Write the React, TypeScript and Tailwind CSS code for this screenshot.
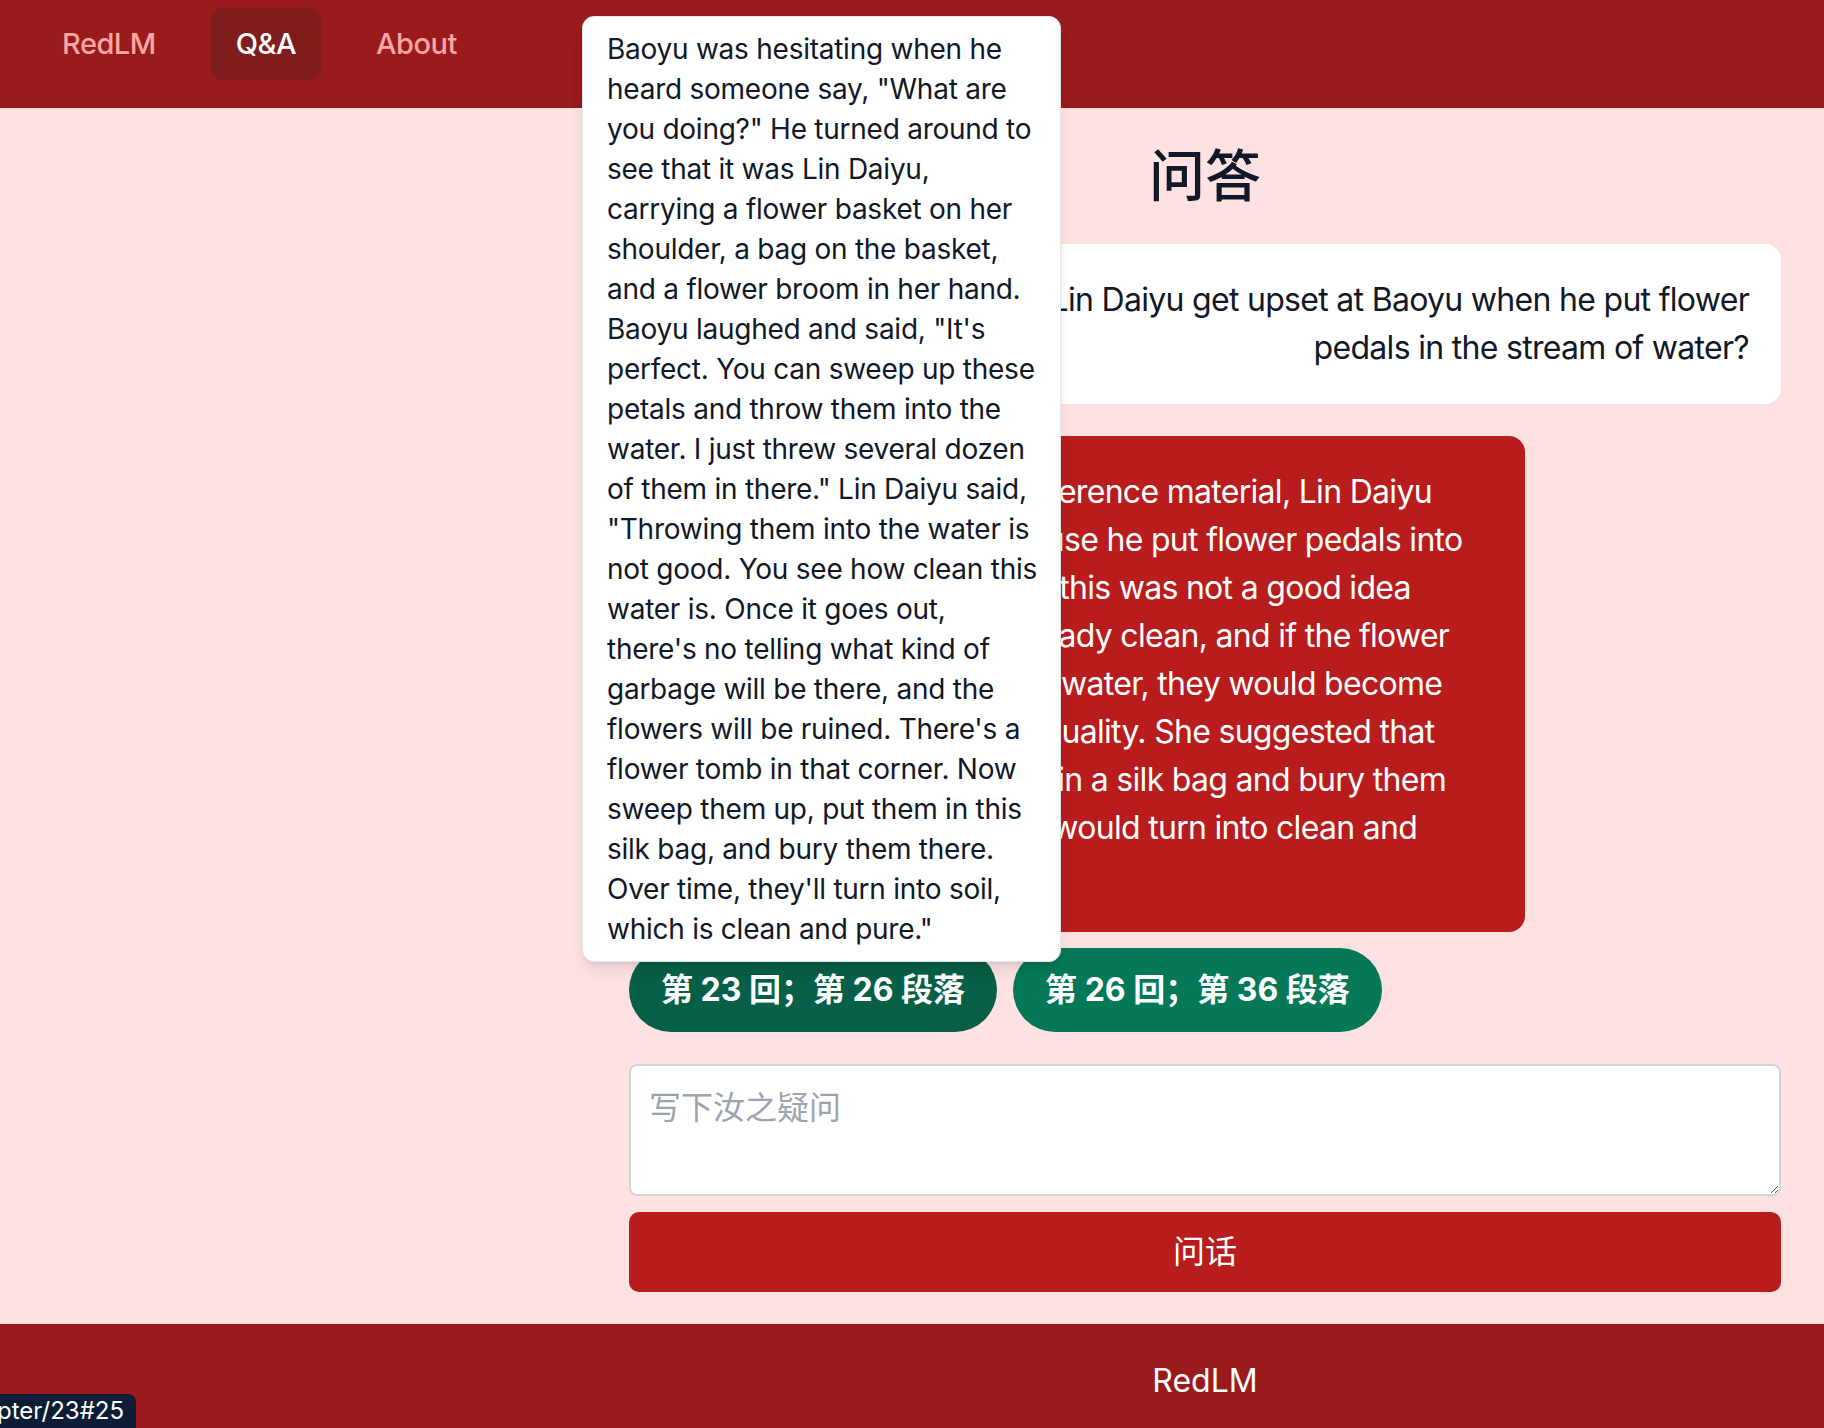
import React from "react";

const font = "font-['Inter','Noto_Sans_CJK_SC',sans-serif]";

const passage = [
  "Baoyu was hesitating when he",
  'heard someone say, "What are',
  'you doing?" He turned around to',
  "see that it was Lin Daiyu,",
  "carrying a flower basket on her",
  "shoulder, a bag on the basket,",
  "and a flower broom in her hand.",
  'Baoyu laughed and said, "It\'s',
  "perfect. You can sweep up these",
  "petals and throw them into the",
  "water. I just threw several dozen",
  'of them in there." Lin Daiyu said,',
  '"Throwing them into the water is',
  "not good. You see how clean this",
  "water is. Once it goes out,",
  "there's no telling what kind of",
  "garbage will be there, and the",
  "flowers will be ruined. There's a",
  "flower tomb in that corner. Now",
  "sweep them up, put them in this",
  "silk bag, and bury them there.",
  "Over time, they'll turn into soil,",
  'which is clean and pure."',
];

const answer = [
  "According to the quoted reference material, Lin Daiyu",
  "got upset with Baoyu because he put flower pedals into",
  "the water. She thought that this was not a good idea",
  "because the water was already clean, and if the flower",
  "petals were thrown into the water, they would become",
  "dirty and spoil the water's quality. She suggested that",
  "Baoyu gather up the petals in a silk bag and bury them",
  "in the flower tomb, so they would turn into clean and",
  "pure soil.",
];

function Lines({ lines }: { lines: string[] }) {
  return (
    <>
      {lines.map((l, i) => (
        <span key={i} className="block whitespace-nowrap">
          {l}
        </span>
      ))}
    </>
  );
}

export default function App() {
  return (
    <div className={`relative h-[1428px] overflow-hidden bg-[#fee2e2] text-[#111827] ${font}`}>
      <header className="h-[108px] bg-[#991b1b]">
        <nav className="flex gap-[31px] pl-[38px] pt-2 text-[29px] font-medium leading-[48px] tracking-[-0.5px]">
          <a className="rounded-xl px-6 py-3 text-[#fca5a5]">RedLM</a>
          <a className="rounded-xl bg-[#7f1d1d] px-[25px] py-3 text-white">Q&amp;A</a>
          <a className="rounded-xl px-6 py-3 text-[#fca5a5]">About</a>
        </nav>
      </header>

      <main className="h-[1216px] pl-[629px] pr-[43px] pt-8">
        <h1 className="mb-8 text-center text-[56px] font-medium leading-[72px]">问答</h1>

        <div className="flex flex-col">
          <div className="ml-auto w-[896px] rounded-2xl bg-white p-8 text-right text-[32px] leading-[48px] tracking-[-0.7px]">
            <Lines lines={["Why did Lin Daiyu get upset at Baoyu when he put flower", "pedals in the stream of water?"]} />
          </div>

          <div className="mt-8 w-[896px] rounded-2xl bg-[#b91c1c] p-8 text-[32px] leading-[48px] tracking-[-0.7px] text-white">
            <Lines lines={answer} />
          </div>

          <div className="mt-4 flex gap-4">
            <div className="relative">
              <button className="h-[84px] rounded-full bg-[#065f46] px-8 text-[32px] font-bold text-white">
                第 23 回；第 26 段落
              </button>
              <div className="absolute bottom-[70px] left-[-47px] z-10 w-[479px] rounded-xl border border-[#e5e7eb] bg-white px-6 py-3 text-[28px] leading-[40px] tracking-[-0.25px] shadow-lg">
                <Lines lines={passage} />
              </div>
            </div>
            <button className="h-[84px] rounded-full bg-[#047857] px-8 text-[32px] font-bold text-white">
              第 26 回；第 36 段落
            </button>
          </div>

          <textarea
            className={`mt-8 block h-[132px] w-full rounded-lg border-2 border-[#d1d5db] bg-white p-[18px] text-[32px] leading-[48px] placeholder:text-[#9ca3af] ${font}`}
            placeholder="写下汝之疑问"
          />

          <button className="mt-4 h-20 w-full rounded-[10px] bg-[#b91c1c] text-[32px] text-white">问话</button>
        </div>
      </main>

      <footer className="h-[104px] bg-[#991b1b] pl-[629px] pr-[43px] pt-[33px] text-center text-[32px] leading-[48px] text-white">
        RedLM
      </footer>

      <div className="absolute bottom-0 left-0 z-20 flex h-[34px] w-[136px] items-center overflow-hidden rounded-tr-lg bg-[#0d1d36] text-[24px] leading-none text-white">
        <span className="ml-[-3px] whitespace-nowrap">pter/23#25</span>
      </div>
    </div>
  );
}
